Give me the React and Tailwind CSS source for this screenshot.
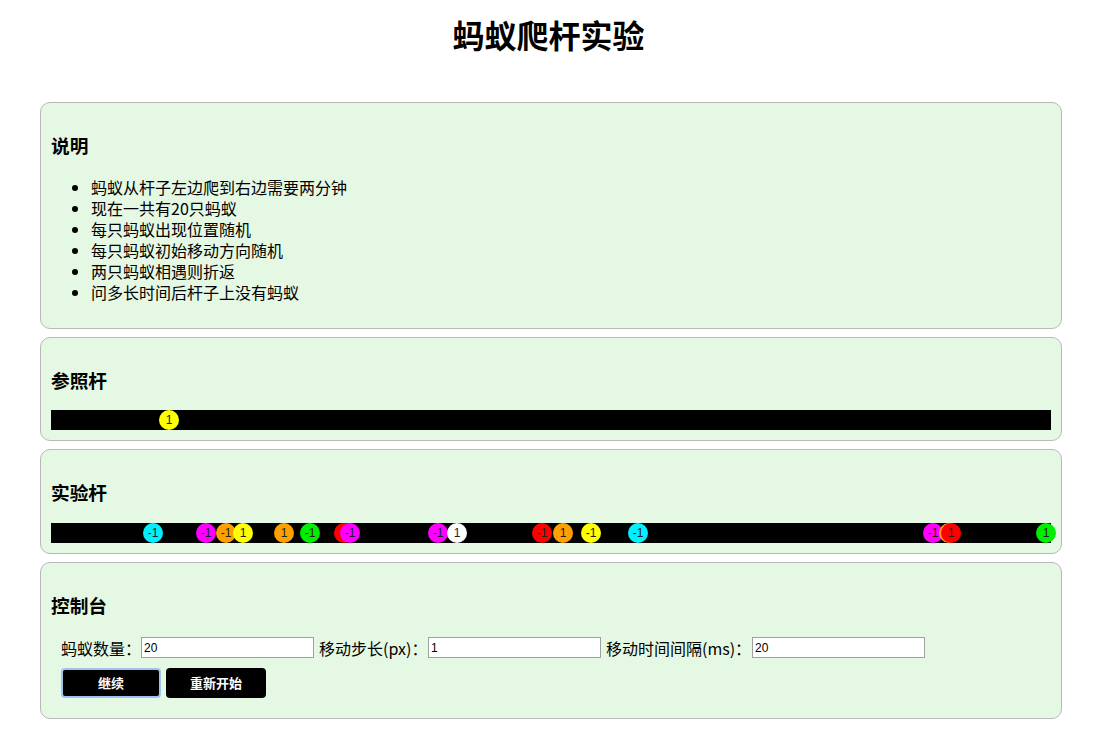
import React from "react";

const expAnts = [
  { x: 92, c: "#00f0ff", t: "-1" },
  { x: 145, c: "#ff00ff", t: "-1" },
  { x: 165, c: "#ffa000", t: "-1" },
  { x: 182, c: "#ffff00", t: "1" },
  { x: 223, c: "#ffa000", t: "1" },
  { x: 249, c: "#00ee00", t: "-1" },
  { x: 283, c: "#ff0000", t: "-1" },
  { x: 289, c: "#ff00ff", t: "-1" },
  { x: 377, c: "#ff00ff", t: "-1" },
  { x: 396, c: "#ffffff", t: "1" },
  { x: 481, c: "#ff0000", t: "-1" },
  { x: 502, c: "#ffa000", t: "1" },
  { x: 530, c: "#ffff00", t: "-1" },
  { x: 577, c: "#00f0ff", t: "-1" },
  { x: 872, c: "#ff00ff", t: "-1" },
  { x: 888, c: "#ffa000", t: "1" },
  { x: 890, c: "#ff0000", t: "1" },
  { x: 985, c: "#00ee00", t: "1" },
];

function Ant({ x, c, t }) {
  return (
    <div
      className="absolute top-0 w-[20px] h-[20px] rounded-full text-center text-[12px] leading-[20px] text-[#222] font-['Liberation_Sans',Arial,sans-serif]"
      style={{ left: x, backgroundColor: c }}
    >
      {t}
    </div>
  );
}

function Panel({ children, className = "" }) {
  return (
    <div
      className={
        "border border-[#b8b8b8] rounded-[10px] bg-[#e5f8e3] px-[10px] pt-[10px] " +
        className
      }
    >
      {children}
    </div>
  );
}

function H3({ children }) {
  return (
    <h3 className="mt-[20px] text-[18.7px] leading-[26px] font-bold text-black">
      {children}
    </h3>
  );
}

export default function App() {
  return (
    <div className="bg-white min-h-[736px] w-[1097px] text-black font-['Noto_Sans','Noto_Sans_CJK_SC',sans-serif]">
      <h1 className="pt-[12px] mb-[46px] text-center text-[32px] leading-[44px] font-bold font-['Noto_Sans_CJK_SC',sans-serif]">
        蚂蚁爬杆实验
      </h1>
      <div className="ml-[40px] w-[1022px] flex flex-col gap-[8px]">
        <Panel className="h-[227px]">
          <H3>说明</H3>
          <ul className="mt-[18px] list-disc pl-[40px] text-[16px] leading-[21px] font-['Noto_Sans_CJK_SC',sans-serif]">
            <li>蚂蚁从杆子左边爬到右边需要两分钟</li>
            <li>现在一共有20只蚂蚁</li>
            <li>每只蚂蚁出现位置随机</li>
            <li>每只蚂蚁初始移动方向随机</li>
            <li>两只蚂蚁相遇则折返</li>
            <li>问多长时间后杆子上没有蚂蚁</li>
          </ul>
        </Panel>
        <Panel className="h-[104px]">
          <H3>参照杆</H3>
          <div className="relative mt-[16px] h-[20px] w-[1000px] bg-black">
            <Ant x={108} c="#ffff00" t="1" />
          </div>
        </Panel>
        <Panel className="h-[105px]">
          <H3>实验杆</H3>
          <div className="relative mt-[17px] h-[20px] w-[1000px] bg-black">
            {expAnts.map((a, i) => (
              <Ant key={i} {...a} />
            ))}
          </div>
        </Panel>
        <Panel className="h-[157px]">
          <H3>控制台</H3>
          <div className="mt-[18px] pl-[10px] flex items-center h-[21px] text-[16px] font-['Noto_Sans_CJK_SC',sans-serif]">
            <span className="w-[80px] whitespace-nowrap">蚂蚁数量：</span>
            <input
              readOnly
              value="20"
              className="w-[173px] h-[21px] border border-[#a0a0a0] bg-white px-[2px] text-[12px] font-['Liberation_Sans',Arial,sans-serif] outline-none"
            />
            <span className="ml-[5px] w-[109px] whitespace-nowrap">移动步长(px)：</span>
            <input
              readOnly
              value="1"
              className="w-[173px] h-[21px] border border-[#a0a0a0] bg-white px-[2px] text-[12px] font-['Liberation_Sans',Arial,sans-serif] outline-none"
            />
            <span className="ml-[5px] w-[146px] whitespace-nowrap">移动时间间隔(ms)：</span>
            <input
              readOnly
              value="20"
              className="w-[173px] h-[21px] border border-[#a0a0a0] bg-white px-[2px] text-[12px] font-['Liberation_Sans',Arial,sans-serif] outline-none"
            />
          </div>
          <div className="mt-[10px] pl-[10px] flex gap-[5px]">
            <button className="w-[100px] h-[30px] rounded-[4px] bg-black text-white text-[13px] font-bold border-2 border-[#9cc4ee] font-['Noto_Sans_CJK_SC',sans-serif]">
              继续
            </button>
            <button className="w-[100px] h-[30px] rounded-[4px] bg-black text-white text-[13px] font-bold font-['Noto_Sans_CJK_SC',sans-serif]">
              重新开始
            </button>
          </div>
        </Panel>
      </div>
    </div>
  );
}
